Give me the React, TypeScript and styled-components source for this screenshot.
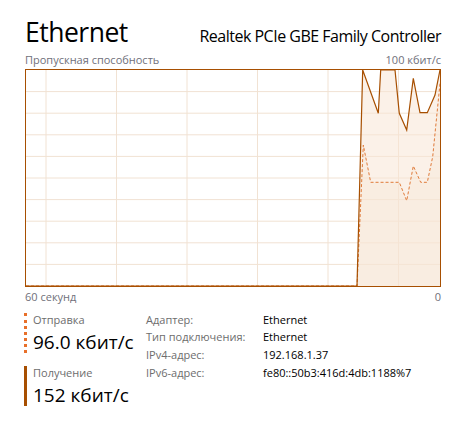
import React from 'react';
import styled, { createGlobalStyle } from 'styled-components';

const GlobalStyle = createGlobalStyle`
	body {
		margin: 0;
		background: #ffffff;
		font-family: 'Open Sans', 'Noto Sans', sans-serif;
	}
`;

const Page = styled.div`
	width: 464px;
	height: 422px;
	box-sizing: border-box;
	padding: 0 23px 0 25px;
	overflow: hidden;
`;

const Header = styled.div`
	display: flex;
	justify-content: space-between;
	align-items: baseline;
	height: 52px;
	padding-top: 14px;
	box-sizing: border-box;
	h1 {
		margin: 0;
		font-size: 26.5px;
		letter-spacing: -0.5px;
		font-weight: 400;
		line-height: 36px;
		color: #000;
	}
	span {
		font-size: 16px;
		letter-spacing: -0.5px;
		color: #000;
	}
`;

const AxisRow = styled.div`
	display: flex;
	justify-content: space-between;
	font-size: 11px;
	line-height: 16px;
	color: #70707a;
`;

const ChartFrame = styled.div`
	width: 416px;
	height: 218px;
	box-sizing: border-box;
	border: 1px solid #a74f01;
	margin: 1px 0 2px;
	svg {
		display: block;
	}
`;

const Stats = styled.div`
	display: flex;
	align-items: flex-start;
	margin-top: 8px;
`;

const Meters = styled.div`
	width: 121px;
	display: flex;
	flex-direction: column;
	gap: 13px;
`;

const Meter = styled.div<{ $dotted?: boolean }>`
	margin-left: -1px;
	padding-left: 6px;
	height: 40px;
	box-sizing: border-box;
	border-left: 3px ${(p) => (p.$dotted ? 'dotted #e8702a' : 'solid #a74f01')};
	.label {
		font-size: 11px;
		line-height: 14px;
		color: #6d6d6d;
	}
	.value {
		margin-top: 2px;
		font-size: 19px;
		line-height: 26px;
		color: #000;
	}
`;

const InfoGrid = styled.div`
	display: grid;
	grid-template-columns: 117px auto;
	align-content: start;
	margin-top: -2.5px;
	font-size: 11px;
	line-height: 17.7px;
	.k {
		color: #6d6d6d;
	}
	.v {
		color: #000;
	}
`;

const recv: [number, number][] = [
	[0, 216], [331, 216], [336.7, 0], [352.3, 43.3], [354.7, 0], [369, 0], [373.3, 43.3],
	[380.7, 60], [387.3, 8.3], [394, 42.7], [401.3, 42.7], [409, 25], [414, 0],
];

const send: [number, number][] = [
	[0, 216], [331, 216], [337.3, 75], [344.7, 112.3], [373.3, 112.3], [380.7, 130.7],
	[387.3, 96], [394.7, 112.3], [401.3, 112.3], [406.7, 86.7], [414, 13.3],
];

const pts = (list: [number, number][]) => list.map(([x, y]) => `${x},${y}`).join(' ');

const Chart = () => {
	const cols = [20, 90.5, 161, 231.5, 302, 372.5];
	const rows = [1, 2, 3, 4, 5, 6, 7, 8, 9].map((k) => k * 21.6);
	return (
		<svg width='414' height='216' viewBox='0 0 414 216'>
			{cols.map((x) => (
				<line key={`c${x}`} x1={x} y1={0} x2={x} y2={216} stroke='#f1e2d3' strokeWidth='1' />
			))}
			{rows.map((y) => (
				<line key={`r${y}`} x1={0} y1={y} x2={414} y2={y} stroke='#f1e2d3' strokeWidth='1' />
			))}
			<polygon points={`${pts(recv)} 414,216`} fill='#f7e6d5' fillOpacity='0.55' />
			<polygon points={`${pts(send)} 414,216`} fill='#f7e6d5' fillOpacity='0.35' />
			<polyline points={pts(send)} fill='none' stroke='#e07b3a' strokeWidth='1' strokeDasharray='3 2' />
			<polyline points={pts(recv)} fill='none' stroke='#a74f01' strokeWidth='1.2' />
		</svg>
	);
};

export default function App() {
	return (
		<Page>
			<GlobalStyle />
			<Header>
				<h1>Ethernet</h1>
				<span>Realtek PCIe GBE Family Controller</span>
			</Header>
			<AxisRow>
				<span>Пропускная способность</span>
				<span>100 кбит/с</span>
			</AxisRow>
			<ChartFrame>
				<Chart />
			</ChartFrame>
			<AxisRow>
				<span>60 секунд</span>
				<span>0</span>
			</AxisRow>
			<Stats>
				<Meters>
					<Meter $dotted>
						<div className='label'>Отправка</div>
						<div className='value'>96.0 кбит/с</div>
					</Meter>
					<Meter>
						<div className='label'>Получение</div>
						<div className='value'>152 кбит/с</div>
					</Meter>
				</Meters>
				<InfoGrid>
					<span className='k'>Адаптер:</span>
					<span className='v'>Ethernet</span>
					<span className='k'>Тип подключения:</span>
					<span className='v'>Ethernet</span>
					<span className='k'>IPv4-адрес:</span>
					<span className='v'>192.168.1.37</span>
					<span className='k'>IPv6-адрес:</span>
					<span className='v'>fe80::50b3:416d:4db:1188%7</span>
				</InfoGrid>
			</Stats>
		</Page>
	);
}
